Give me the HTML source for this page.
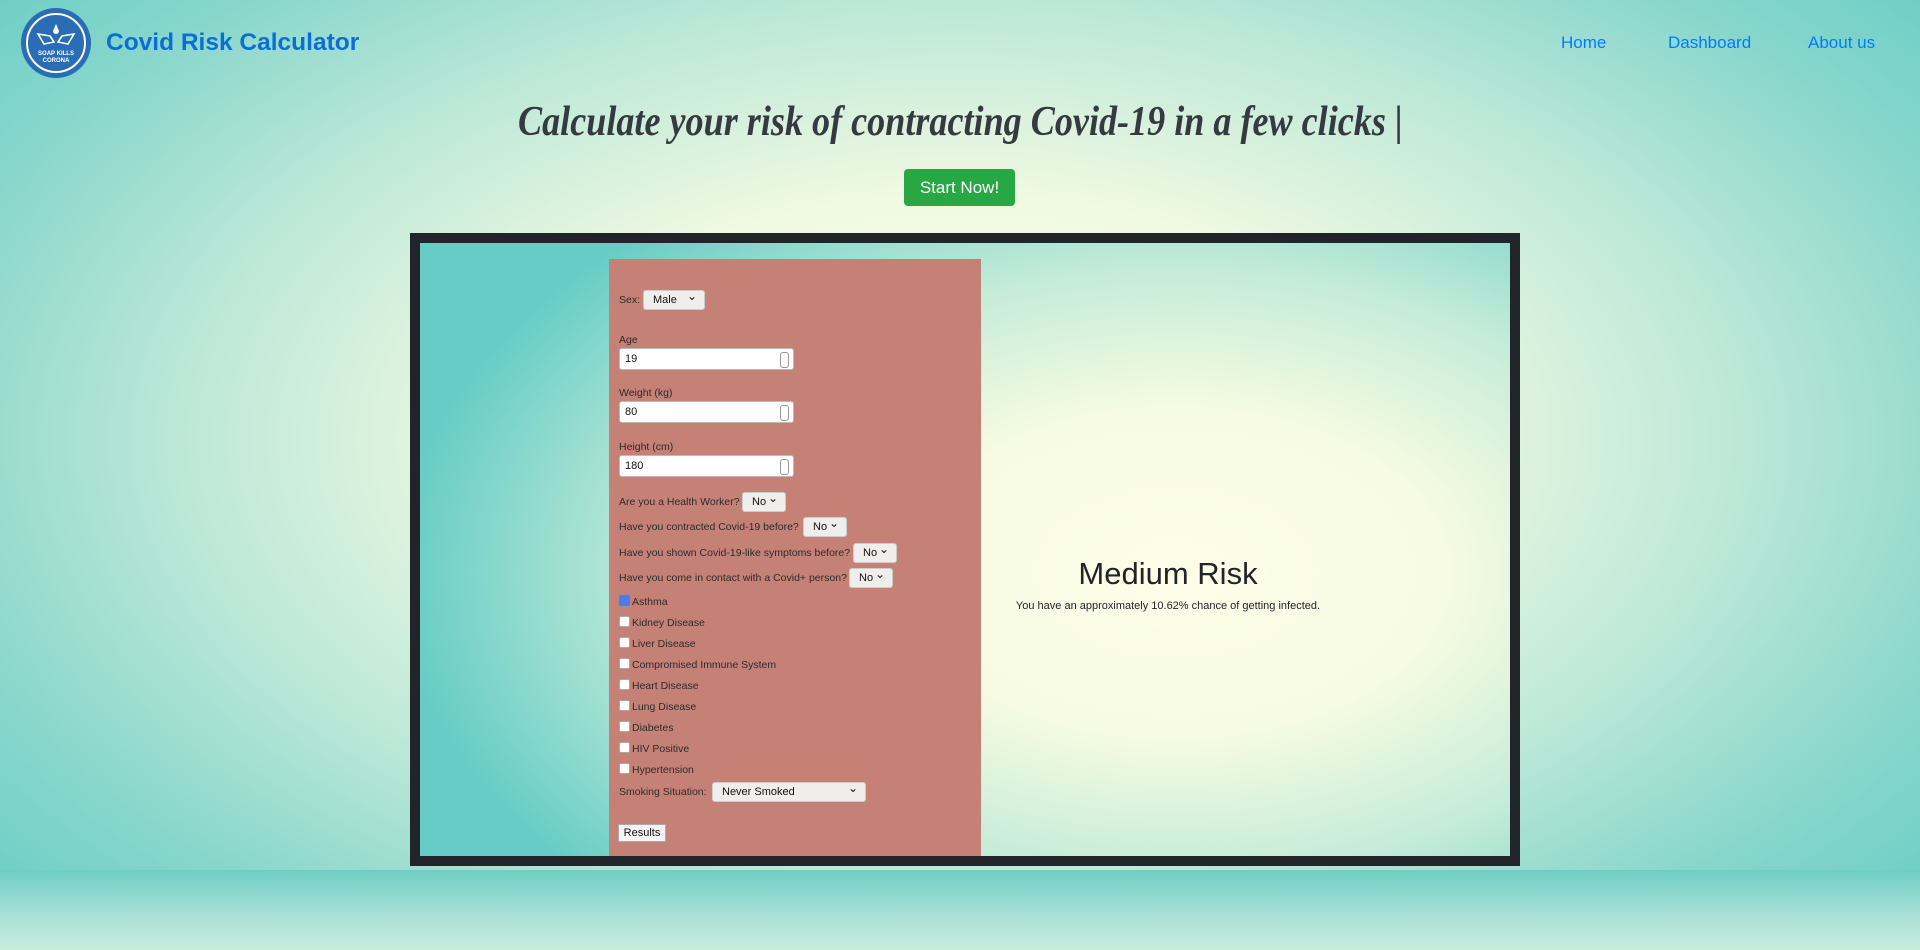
<!DOCTYPE html>
<html><head><meta charset="utf-8"><style>
*{box-sizing:border-box;margin:0;padding:0}
html,body{width:1920px;height:950px;overflow:hidden}
body{font-family:"Liberation Sans","DejaVu Sans",sans-serif;position:relative;
background:radial-gradient(ellipse 1250px 700px at 960px 440px,#fdfee8 0%,#f0f9e2 35%,#bde8d8 62%,#88d6cb 85%,#6fcfc6 100%);}
.bottom{position:absolute;left:0;top:870px;width:1920px;height:80px;background:linear-gradient(#6fcdc4,#a9e0d5 55%,#c8ebdd)}
.logo{position:absolute;left:21px;top:8px;width:70px;height:70px;border-radius:50%;background:#2a6db5;}
.logo .ring{position:absolute;left:5px;top:5px;width:60px;height:60px;border-radius:50%;border:2px solid #fff}
.logo .t{position:absolute;width:70px;left:0;text-align:center;color:#fff;font-size:6px;font-weight:bold;line-height:7px}
.brand{position:absolute;left:106px;top:29px;font-size:24.5px;font-weight:bold;color:#0a6fd4}
.nav{position:absolute;top:33px;font-size:17px;color:#007bff}
h1{position:absolute;left:0;width:1920px;top:98px;text-align:center;font-family:"Liberation Serif",serif;font-style:italic;font-weight:bold;font-size:42px;color:#343a40;line-height:48px}
h1 span{display:inline-block;transform:scaleX(0.86);white-space:nowrap}
.start{position:absolute;left:904px;top:169px;width:111px;height:37px;background:#28a745;border-radius:4px;color:#fff;font-size:17px;text-align:center;line-height:37px}
.frame{position:absolute;left:410px;top:233px;width:1110px;height:633px;background:#212529;padding:10px}
.inner{width:100%;height:100%;background:radial-gradient(ellipse 780px 470px at 755px 330px,#fdfee8 0%,#f6fbe2 35%,#c4ebd9 65%,#86d7cc 88%,#66ccc5 100%);position:relative}
.form{position:absolute;left:189px;top:16px;width:372px;height:597px;background:#c68176;font-size:10.5px;color:#2b2b2b}
.a{position:absolute;left:10px;white-space:nowrap}
.sel{position:absolute;height:20px;background:#efeeec;border:1px solid #ccc;border-radius:3px;font-size:11px;color:#111;padding-left:9px;line-height:18px}
.sel:after{content:"⌄";position:absolute;right:7px;top:-4px;font-size:12px}
.inp{position:absolute;left:10px;width:175px;height:22px;background:#fff;border:1px solid #bbb;border-radius:3px;padding-left:5px;line-height:20px;font-size:11px;color:#111}
.inp:after{content:"";position:absolute;right:4px;top:3px;width:7px;height:14px;border:1px solid #999;border-radius:3px}
.cb{position:absolute;left:10px;width:11px;height:11px;background:#fff;border:1px solid #aaa;border-radius:2px}
.cb.on{background:#4a7de8;border-color:#4a7de8}
.res{position:absolute;left:9px;top:565px;width:48px;height:18px;background:#f4f4f4;border:1px solid #aaa;font-size:11px;text-align:center;line-height:16px;color:#111}
.mr{position:absolute;left:488px;width:520px;text-align:center;color:#212529}
</style></head><body>
<div class="bottom"></div>
<div class="logo"><div class="ring"></div>
<svg style="position:absolute;left:15px;top:14px" width="40" height="26" viewBox="0 0 40 26"><path d="M20 2 L23 9 A3 3 0 1 1 17 9 Z" fill="#fff"/><path d="M2 12 L14 14 L18 20 L8 22 Z M38 12 L26 14 L22 20 L32 22 Z" fill="none" stroke="#fff" stroke-width="1.6"/></svg>
<div class="t" style="top:43px">SOAP KILLS<br>CORONA</div></div>
<div class="brand">Covid Risk Calculator</div>
<div class="nav" style="left:1561px">Home</div>
<div class="nav" style="left:1668px">Dashboard</div>
<div class="nav" style="left:1808px">About us</div>
<h1><span>Calculate your risk of contracting Covid-19 in a few clicks |</span></h1>
<div class="start">Start Now!</div>
<div class="frame"><div class="inner">
<div class="form">
<div class="a" style="top:35px">Sex:</div><div class="sel" style="left:34px;top:31px;width:62px">Male</div>
<div class="a" style="top:75px">Age</div><div class="inp" style="top:89px">19</div>
<div class="a" style="top:128px">Weight (kg)</div><div class="inp" style="top:142px">80</div>
<div class="a" style="top:182px">Height (cm)</div><div class="inp" style="top:196px">180</div>
<div class="a" style="top:237px">Are you a Health Worker?</div><div class="sel" style="left:133px;top:233px;width:44px">No</div>
<div class="a" style="top:262px">Have you contracted Covid-19 before?</div><div class="sel" style="left:194px;top:258px;width:44px">No</div>
<div class="a" style="top:288px">Have you shown Covid-19-like symptoms before?</div><div class="sel" style="left:244px;top:284px;width:44px">No</div>
<div class="a" style="top:313px">Have you come in contact with a Covid+ person?</div><div class="sel" style="left:240px;top:309px;width:44px">No</div>
<div class="cb on" style="top:336px"></div><div class="a" style="left:23px;top:337px">Asthma</div>
<div class="cb" style="top:357px"></div><div class="a" style="left:23px;top:358px">Kidney Disease</div>
<div class="cb" style="top:378px"></div><div class="a" style="left:23px;top:379px">Liver Disease</div>
<div class="cb" style="top:399px"></div><div class="a" style="left:23px;top:400px">Compromised Immune System</div>
<div class="cb" style="top:420px"></div><div class="a" style="left:23px;top:421px">Heart Disease</div>
<div class="cb" style="top:441px"></div><div class="a" style="left:23px;top:442px">Lung Disease</div>
<div class="cb" style="top:462px"></div><div class="a" style="left:23px;top:463px">Diabetes</div>
<div class="cb" style="top:483px"></div><div class="a" style="left:23px;top:484px">HIV Positive</div>
<div class="cb" style="top:504px"></div><div class="a" style="left:23px;top:505px">Hypertension</div>
<div class="a" style="top:527px">Smoking Situation:</div><div class="sel" style="left:103px;top:523px;width:154px">Never Smoked</div>
<div class="res">Results</div>
</div>
<div class="mr" style="top:313px;font-size:31px;font-weight:500">Medium Risk</div>
<div class="mr" style="top:357px;font-size:11px">You have an approximately 10.62% chance of getting infected.</div>
</div></div>
</body></html>
